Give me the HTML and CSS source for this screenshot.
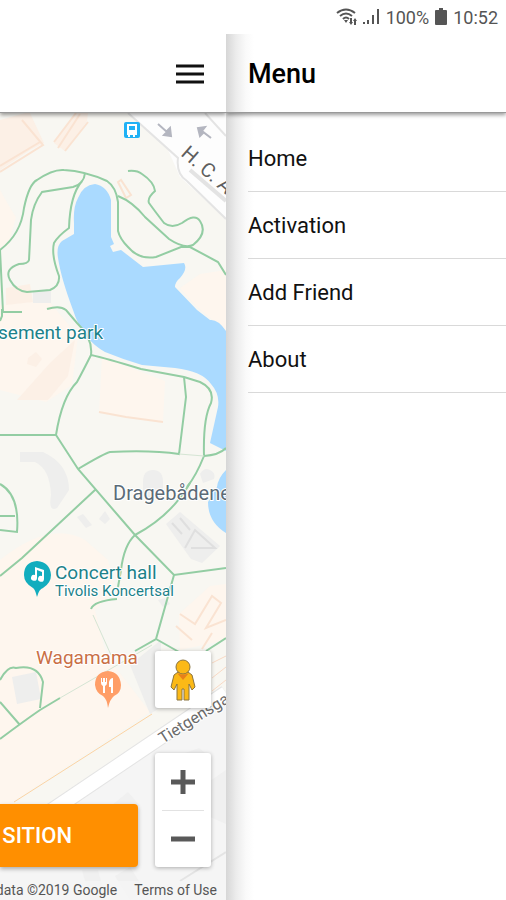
FILE: index.html
```html
<!DOCTYPE html>
<html lang="en">
<head>
    <meta charset="UTF-8">
    <meta name="viewport" content="width=device-width, initial-scale=1.0">
    <title>Menu</title>
    <link rel="stylesheet" href="styles.css">
</head>
<body>
    <div class="status-bar">
        <svg class="wifi-icon" viewBox="0 0 22 18" width="22" height="18">
            <path d="M1 5Q10 -2 19 5M4 8Q10 3 16 8M7 11Q10 8 13 11"/>
            <path class="solid" d="M8 12h4l-2 3zM15 17l-2-3h1v-4h2v4h1zM18 17v-4h-1l2-3 2 3h-1v4z"/>
        </svg>
        <svg class="signal-icon" viewBox="0 0 18 18" width="18" height="18">
            <path d="M1 14h2v2H1zM5 12h2v4H5zM10 7h2v9h-2zM15 1h2v15h-2z"/>
        </svg>
        <span class="battery-level">100%</span>
        <svg class="battery-icon" viewBox="0 0 12 18" width="12" height="18">
            <path d="M4 0h4v2h3q1 0 1 1v13q0 1-1 1H1q-1 0-1-1V3q0-1 1-1h3z"/>
        </svg>
        <span>10:52</span>
    </div>

    <div class="app">
        <div class="page">
            <header class="toolbar page-toolbar">
                <button class="menu-button" aria-label="Menu">
                    <svg viewBox="0 0 28 20" width="28" height="20"><path d="M0 2h28M0 10h28M0 18h28"/></svg>
                </button>
            </header>

            <main class="map">
                <svg class="map-canvas" viewBox="0 113 226 787" preserveAspectRatio="xMaxYMin slice">
                    <rect class="land" x="0" y="113" width="226" height="787"/>

                    <!-- city blocks and buildings -->
                    <path class="area" d="M0 190Q14 215 16 217L8 246 0 248zM0 305L48 300 78 336 72 385 46 402 0 390zM0 560Q50 520 85 540L108 560 115 590 95 610 106 655 150 712 0 810z"/>
                    <path class="area" d="M102 357L165 381 163 422 99 412zM180 288L200 274 226 270 226 331 196 306zM179 614L210 586 226 584 226 640 180 650z"/>
                    <path class="area-dark" d="M0 120L25 113H30L44 143 30 150 0 170zM54 143L75 113H88L87 121 65 151zM17 400L50 363 75 340 68 376 48 400zM28 358l8-6 6 7-6 8-9-3zM6 288L30 284 33 302 6 305z"/>
                    <path class="building-line" d="M0 172L43 145 22 120M54 142L76 113M65 151L88 122M58 148L80 114M0 166L40 142M99 412L126 417 163 422M118 182l3-2 10 15-5 3zM176 626l16 14M180 614l15 10 17-28 9 7-15 25 20-8M202 649l10-16"/>
                    <path class="road-bg" d="M128 113H226V219L180 177 168 150z"/>
                    <path class="road-edge" d="M128 113L178 158Q176 174 187 181L226 219M205 113L226 136"/>
                    <path class="service-road" d="M190 170L226 201"/>
                    <path class="building" d="M20 452H43Q69 464 69 490L57 508Q48 513 51 495 50 469 35 462H20zM143 482q0-12 10-12t10 12v15h-20zM200 474q4-7 10-4t4 9l-11 4zM33 291h18v12H33zM77 517l6-3 9 11-6 3zM99 519l6-8 5 8-5 5zM166 524L180 512 220 546 202 563 191 559zM158 600l7-2 5 6-7 3zM12 677L36 672 41 699 17 704zM130 665L161 640V707L150 714z"/>
                    <path class="roof-line" d="M172 523l10 11M180 518l10 12M185 548l10-18 20 18-24 0"/>
                    <path class="block" d="M0 838L226 695V900H0z"/>
                    <path class="block-detail" d="M111 806L128 792 140 806zM210 781L226 770V824L210 817zM185 753L199 748 205 753zM82 870h16L106 900H90zM115 876l15-9 15 24-15 9z"/>
                    <path class="rail-edge" d="M14 802L152 714"/>
                    <path class="rail" d="M212 663L226 656M212 678L226 667M212 691L226 680"/>
                    <path class="street-edge" d="M14 836L226 693"/>
                    <path class="street" d="M14 836L226 693"/>
                    <path class="road-edge" d="M180 881L226 852"/>

                    <!-- lake -->
                    <path class="water" d="M95 184Q83 185 78 198 73 207 74 223V234L62 241Q56 246 58 258 61 278 73 310 82 339 105 352 122 359 142 365L175 368Q202 371 211 384 220 394 218 407L210 443 226 451V331Q218 319 210 320L197 310 175 287Q175 282 180 278 188 269 184 263L143 267 121 250 113 252 110 246 114 244 111 237V200Q107 186 95 184z"/>
                    <path class="water" d="M226 470Q218 478 217 487L208 502Q208 522 226 533z"/>

                    <!-- park paths -->
                    <path class="trail" d="M0 250Q21 234 24 208 29 184 37 180 53 169 64 170 85 171 107 181 116 187 118 202V231Q120 239 128 247 139 260 156 257L181 247H190L218 262 226 275"/>
                    <path class="trail" d="M85 173Q84 184 73 187L42 192Q33 204 31 220L29 260Q28 264 19 264 4 269 10 280 16 291 27 292L50 290Q60 286 59 276 51 255 54 243 58 236 69 228 70 195 82 181"/>
                    <path class="trail" d="M118 196Q133 202 145 217L169 239Q184 249 193 245 208 233 200 221 195 213 182 223 172 229 164 223 154 210 149 203 147 198 155 191 154 182 142 174 137 170 128 171M0 250L3 312H22M2 309V316L0 321M47 309Q60 305 66 310L77 323Q93 338 91 355"/>
                    <path class="trail" d="M91 355Q105 358 141 369L184 377 200 382Q215 389 211 403 203 418 204 456 219 455 226 448M184 377L186 397 179 454Q152 450 110 452 105 453 78 469M91 355Q83 371 77 382 62 397 56 435H0M56 435L78 469 135 535 174 575 226 568M204 456Q196 476 187 487M95 490L22 558 0 576"/>
                    <path class="trail" d="M190 483Q171 516 135 535 124 545 121 570L118 587M174 575L156 639 135 651M156 639L179 652M91 609Q94 601 117 599M0 484Q20 495 17 532L0 530M0 516H15M0 680Q8 665 16 668 38 664 43 682L40 708M0 702L20 725M0 739Q24 721 40 710L60 698M206 651L226 638"/>
                    <path class="trail-faint" d="M93 615L111 655M60 698L152 645M179 454L204 456"/>

                    <!-- one-way arrows -->
                    <path class="arrow" d="M158 124l9 8-3 3 7 1-1-8-3 3M211 138l-9-7 3-4-7 1 2 8 3-3"/>

                    <g class="transit">
                        <rect x="124" y="122" width="16" height="16" rx="2"/>
                        <path d="M127 124h10v11h-2v2h-2v-2h-3v2h-2v-2h-1zM129 126v4h6v-4z"/>
                    </g>

                    <!-- place pins -->
                    <g class="pin pin-music">
                        <path d="M37 561Q24 562 24 575 24 583 33 588 35 589 37 597 39 589 43 588 51 583 51 575 50 562 37 561z"/>
                        <path class="pin-glyph" d="M35 567l9 3v9a3 3 0 1 1-2-3v-4l-5-2v8a3 3 0 1 1-2-3z"/>
                    </g>
                    <g class="pin pin-food">
                        <path d="M108 671Q95 672 95 685 96 693 103 696 107 699 108 708 110 699 114 696 121 693 121 685 120 672 108 671z"/>
                        <path class="pin-glyph" d="M101 678h1v4h1v-4h2v4h1v-4h1v5q0 2-2 3v7h-2v-7q-2-1-2-3zM113 678v15h-2v-6h-2v-5q1-4 4-4z"/>
                    </g>

                    <text class="label label-park" x="-2" y="339">sement park</text>
                    <text class="label label-place" x="113" y="500">Dragebådene</text>
                    <text class="label label-park" x="55" y="579">Concert hall</text>
                    <text class="label label-sub" x="55" y="596">Tivolis Koncertsal</text>
                    <text class="label label-food" x="36" y="664">Wagamama</text>
                    <text class="label label-road" transform="translate(180 155) rotate(41)">H. C. A</text>
                    <text class="label label-street" transform="translate(163 744) rotate(-32)">Tietgensga</text>
                </svg>

                <div class="map-controls">
                    <button class="position-button">SITION</button>
                    <div class="control-stack">
                        <button class="control street-view" aria-label="Street View">
                            <svg viewBox="0 0 26 44" width="26" height="44">
                                <path class="pegman" d="M8 14L4 17 1 29 4 32 7 26V42H12V31H14V42H19V26L22 32 25 29 22 17 18 14z"/>
                                <circle class="pegman" cx="13" cy="9" r="7"/>
                                <path class="pegman-neck" d="M7 15Q13 18 19 15L13 22z"/>
                            </svg>
                        </button>
                        <div class="zoom">
                            <button class="control" aria-label="Zoom in">
                                <svg viewBox="0 0 26 26" width="26" height="26"><path class="zoom-glyph" d="M1 13h24M13 1v24"/></svg>
                            </button>
                            <button class="control" aria-label="Zoom out">
                                <svg viewBox="0 0 26 26" width="26" height="26"><path class="zoom-glyph" d="M1 13h24"/></svg>
                            </button>
                        </div>
                    </div>
                </div>
                <footer class="map-footer">
                    <span>data ©2019 Google</span>
                    <a href="#">Terms of Use</a>
                </footer>
            </main>
        </div>

        <aside class="side-menu">
            <header class="toolbar">
                <h1>Menu</h1>
            </header>
            <nav class="menu-list">
                <a href="#">Home</a>
                <a href="#">Activation</a>
                <a href="#">Add Friend</a>
                <a href="#">About</a>
            </nav>
        </aside>
    </div>
</body>
</html>
```
FILE: styles.css
```css
* {
    box-sizing: border-box;
}
body {
    margin: 0;
    height: 100vh;
    display: flex;
    flex-direction: column;
    font-family: Roboto, 'Liberation Sans', sans-serif;
    color: #111;
    background: #fff;
    overflow: hidden;
}
button {
    font-family: inherit;
    border: none;
    padding: 0;
    cursor: pointer;
}
a {
    color: inherit;
    text-decoration: none;
}

/* status bar */
.status-bar {
    display: flex;
    align-items: center;
    justify-content: flex-end;
    height: 34px;
    padding-right: 8px;
    font-size: 18px;
    color: #555;
}
.status-bar svg {
    fill: #555;
}
.status-bar .wifi-icon {
    fill: none;
    stroke: #555;
    stroke-width: 2;
}
.wifi-icon .solid {
    fill: #555;
    stroke: none;
}
.signal-icon {
    margin: 0 6px 0 4px;
}
.battery-icon {
    margin: 0 6px;
}

/* layout */
.app {
    flex: 1;
    display: flex;
    min-height: 0;
}
.page {
    flex: 1;
    min-width: 0;
    display: flex;
    flex-direction: column;
}
.toolbar {
    position: relative;
    z-index: 1;
    flex: none;
    display: flex;
    align-items: center;
    height: 79px;
    padding-top: 2px;
    border-bottom: 1px solid #999;
    box-shadow: 0 2px 4px rgba(0, 0, 0, 0.4);
    clip-path: inset(0 0 -10px 0);
}
.page-toolbar {
    justify-content: flex-end;
    padding-right: 22px;
    background: #fff;
}
.menu-button {
    display: flex;
    background: none;
}
.menu-button path {
    stroke: #111;
    stroke-width: 3;
}

/* side menu */
.side-menu {
    width: 280px;
    background: linear-gradient(to right, #d6d6d6, #ececec 10px, #fafafa 20px, #fff 28px);
}
.side-menu .toolbar {
    padding-left: 22px;
    background: linear-gradient(to right, #d6d6d6, #ececec 10px, #fafafa 20px, #fff 28px);
}
.side-menu h1 {
    margin: 0;
    font-size: 27px;
    font-weight: 500;
    color: #000;
}
.menu-list {
    display: flex;
    flex-direction: column;
    padding: 12px 0 0 22px;
}
.menu-list a {
    display: flex;
    align-items: center;
    height: 67px;
    border-bottom: 1px solid #d9d9d9;
    font-size: 22px;
}

/* map */
.map {
    position: relative;
    flex: 1;
    min-height: 0;
    display: flex;
    flex-direction: column;
    justify-content: flex-end;
    overflow: hidden;
}
.map-canvas {
    position: absolute;
    top: 0;
    left: 0;
    width: 100%;
    height: 100%;
}
.land {
    fill: #f8f7f2;
}
.block {
    fill: #f5f5f5;
}
.block-detail {
    fill: #f0f0f0;
}
.area {
    fill: #fef6ee;
}
.area-dark {
    fill: #fcf0e6;
}
.building {
    fill: #eeeeed;
}
.building-line {
    fill: none;
    stroke: #fae3d2;
    stroke-width: 2;
}
.roof-line {
    fill: none;
    stroke: #dfdfdf;
    stroke-width: 2;
}
.water {
    fill: #aadaff;
}
.trail {
    fill: none;
    stroke: #93cda3;
    stroke-width: 2;
}
.trail-faint {
    fill: none;
    stroke: #d5e5d4;
    stroke-width: 1;
}
.road-bg {
    fill: #fdfdfd;
}
.road-edge {
    fill: none;
    stroke: #e4e4e4;
    stroke-width: 2;
}
.service-road {
    stroke: #e3e3e3;
    stroke-width: 4;
}
.rail {
    fill: none;
    stroke: #f8d9c4;
    stroke-width: 1;
}
.rail-edge {
    stroke: #fbd3a4;
    stroke-width: 1;
}
.street-edge {
    stroke: #e4e4e4;
    stroke-width: 16;
}
.street {
    stroke: #fff;
    stroke-width: 14;
}
.arrow {
    fill: #b4b6c0;
    stroke: #b4b6c0;
    stroke-width: 2;
}
.transit rect {
    fill: #1fb1f5;
}
.transit path {
    fill: #fff;
    fill-rule: evenodd;
}
.pin-music {
    fill: #12adbe;
}
.pin-food {
    fill: #ff9e67;
}
.pin-glyph {
    fill: #fff;
}
.label {
    font-size: 19px;
    paint-order: stroke;
    stroke: #fff;
    stroke-width: 2;
    stroke-linejoin: round;
}
.label-park {
    fill: #1c828a;
}
.label-sub {
    font-size: 15px;
    fill: #1c828a;
}
.label-place {
    font-size: 20px;
    fill: #5b6b77;
}
.label-food {
    fill: #ca6f46;
}
.label-road {
    font-size: 20px;
    fill: #5e5e5e;
}
.label-street {
    font-size: 16px;
    fill: #6b6b6b;
}

/* map controls */
.map-controls {
    position: relative;
    display: flex;
    align-items: flex-end;
    gap: 17px;
    padding-right: 15px;
}
.position-button {
    flex: 1;
    height: 63px;
    padding-right: 66px;
    border-radius: 0 4px 4px 0;
    background: #ff8f00;
    color: #fff;
    font-size: 22px;
    font-weight: 500;
    text-align: right;
    box-shadow: 0 2px 4px rgba(0, 0, 0, 0.3);
}
.control-stack {
    display: flex;
    flex-direction: column;
    gap: 45px;
}
.control {
    display: flex;
    align-items: center;
    justify-content: center;
    width: 56px;
    height: 57px;
    background: none;
}
.street-view,
.zoom {
    border-radius: 3px;
    background: #fff;
    box-shadow: 0 1px 4px rgba(0, 0, 0, 0.3);
}
.zoom .control + .control {
    background: linear-gradient(#e2e2e2, #e2e2e2) center top / 42px 1px no-repeat;
}
.zoom-glyph {
    stroke: #595959;
    stroke-width: 5;
}
.pegman {
    fill: #fbb917;
    stroke: #8a7440;
    stroke-width: 1;
}
.pegman-neck {
    fill: #e8801a;
}
.map-footer {
    position: relative;
    display: flex;
    justify-content: flex-end;
    gap: 17px;
    margin-top: 14px;
    padding-right: 9px;
    font-size: 14px;
    line-height: 19px;
    white-space: nowrap;
    color: #555;
    background: rgba(245, 245, 245, 0.7);
}
```
